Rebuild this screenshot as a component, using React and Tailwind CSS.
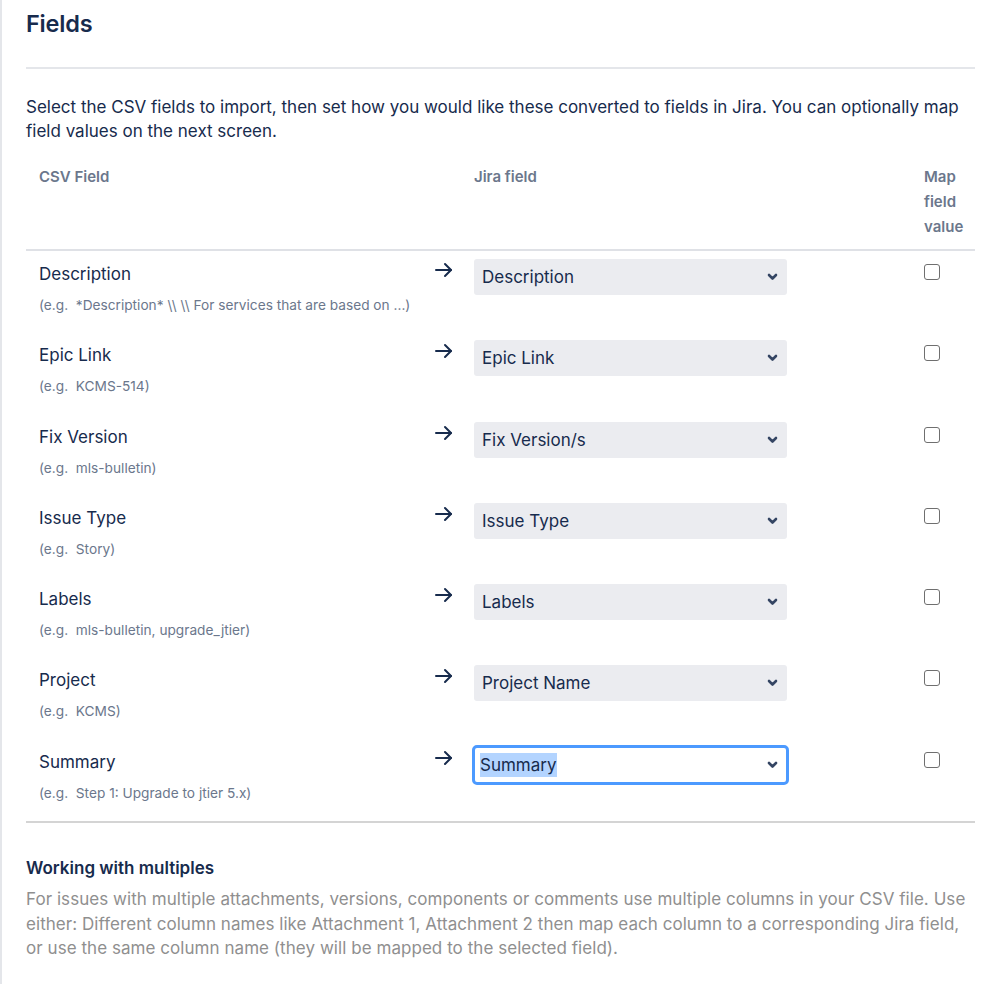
import React from "react";

const rows = [
  { name: "Description", eg: "(e.g.  *Description* \\\\ \\\\ For services that are based on ...)", value: "Description" },
  { name: "Epic Link", eg: "(e.g.  KCMS-514)", value: "Epic Link" },
  { name: "Fix Version", eg: "(e.g.  mls-bulletin)", value: "Fix Version/s" },
  { name: "Issue Type", eg: "(e.g.  Story)", value: "Issue Type" },
  { name: "Labels", eg: "(e.g.  mls-bulletin, upgrade_jtier)", value: "Labels" },
  { name: "Project", eg: "(e.g.  KCMS)", value: "Project Name" },
  { name: "Summary", eg: "(e.g.  Step 1: Upgrade to jtier 5.x)", value: "Summary", focused: true },
];

function Arrow() {
  return (
    <svg width="20" height="16" viewBox="0 0 20 16" fill="none" stroke="#172b4d" strokeWidth="2" strokeLinecap="round" strokeLinejoin="round">
      <path d="M2 8h15" />
      <path d="M11 2l6 6-6 6" />
    </svg>
  );
}

function Chevron() {
  return (
    <svg width="11" height="8" viewBox="0 0 11 8" fill="none" stroke="#344563" strokeWidth="2.6" strokeLinecap="round" strokeLinejoin="round">
      <path d="M2 2l3.5 3.5L9 2" />
    </svg>
  );
}

function Select({ value, focused }) {
  if (focused) {
    return (
      <div className="-ml-[2px] -mt-[2px] flex h-[40px] w-[317px] items-center justify-between rounded-[5px] border-[3px] border-[#4c9aff] bg-white pl-[5px] pr-[8px]">
        <span className="bg-[#b3d4ff] text-[17px] leading-[24px] text-[#172b4d]">{value}</span>
        <Chevron />
      </div>
    );
  }
  return (
    <div className="flex h-[36px] w-[313px] items-center justify-between rounded-[3px] bg-[#ebecf0] pl-[8px] pr-[9px]">
      <span className="text-[17px] leading-[24px] text-[#172b4d]">{value}</span>
      <Chevron />
    </div>
  );
}

export default function App() {
  return (
    <div className="min-h-[984px] bg-white font-['Inter',sans-serif] text-[#172b4d]">
      <div className="min-h-[984px] border-l-2 border-[#e4e6ea] pl-[24px]">
        <div className="w-[949px]">
          <h1 className="pt-[9px] text-[23.5px] font-semibold leading-[30px] tracking-[-0.2px] text-[#172b4d]">Fields</h1>
          <div className="mt-[28px] h-[2px] bg-[#e4e6ea]" />
          <p className="mt-[26px] text-[17px] leading-[24px] text-[#172b4d]">
            Select the CSV fields to import, then set how you would like these converted to fields in Jira. You can optionally map field values on the next screen.
          </p>
          <div className="mt-[21px] grid grid-cols-[408px_40px_450px_51px] border-b-2 border-[#dfe1e6] pb-[10px] text-[15px] font-semibold leading-[25px] text-[#6b778c]">
            <div className="pl-[13px]">CSV Field</div>
            <div />
            <div>Jira field</div>
            <div>
              Map
              <br />
              field
              <br />
              value
            </div>
          </div>
          {rows.map((r) => (
            <div key={r.name} className="grid h-[81.3px] grid-cols-[408px_40px_450px_51px]">
              <div className="pl-[13px] pt-[11px]">
                <div className="text-[17px] leading-[24px] text-[#172b4d]">{r.name}</div>
                <div className="mt-[9px] whitespace-pre text-[13.7px] leading-[20px] text-[#6b778c]">{r.eg}</div>
              </div>
              <div className="pt-[11px]">
                <Arrow />
              </div>
              <div className="pt-[8px]">
                <Select value={r.value} focused={r.focused} />
              </div>
              <div className="pt-[13px]">
                <div className="h-[16px] w-[16px] rounded-[3px] border border-[#6f6f6f] bg-white" />
              </div>
            </div>
          ))}
          <div className="mt-[1px] h-[2px] bg-[#d4d4d4]" />
          <h2 className="mt-[34px] text-[17px] font-semibold leading-[22px] text-[#172b4d]">Working with multiples</h2>
          <p className="mt-[8px] text-[17px] leading-[24.5px] tracking-[0.05px] text-[#8f8f8f]">
            For issues with multiple attachments, versions, components or comments use multiple columns in your CSV file. Use either: Different column names like Attachment 1, Attachment 2 then map each column to a corresponding Jira field, or use the same column name (they will be mapped to the selected field).
          </p>
        </div>
      </div>
    </div>
  );
}
